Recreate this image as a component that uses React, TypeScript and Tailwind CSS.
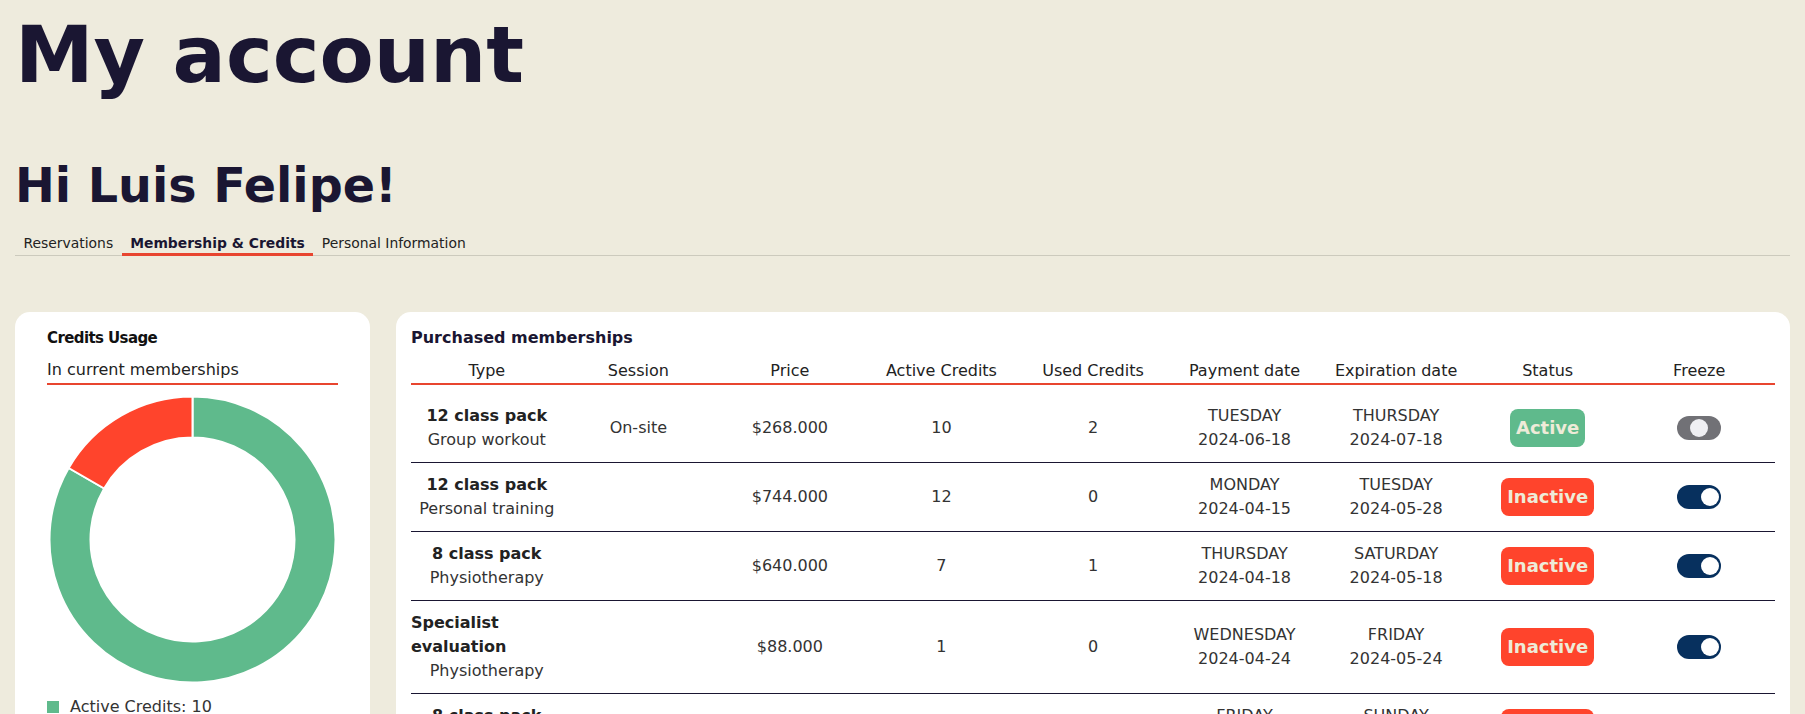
import React from "react"

type Membership = {
  title: string
  kind: string
  session: string
  price: string
  active: number
  used: number
  payDay: string
  payDate: string
  expDay: string
  expDate: string
  status: "Active" | "Inactive"
  frozen: boolean
}

const memberships: Membership[] = [
  { title: "12 class pack", kind: "Group workout", session: "On-site", price: "$268.000", active: 10, used: 2, payDay: "TUESDAY", payDate: "2024-06-18", expDay: "THURSDAY", expDate: "2024-07-18", status: "Active", frozen: false },
  { title: "12 class pack", kind: "Personal training", session: "", price: "$744.000", active: 12, used: 0, payDay: "MONDAY", payDate: "2024-04-15", expDay: "TUESDAY", expDate: "2024-05-28", status: "Inactive", frozen: true },
  { title: "8 class pack", kind: "Physiotherapy", session: "", price: "$640.000", active: 7, used: 1, payDay: "THURSDAY", payDate: "2024-04-18", expDay: "SATURDAY", expDate: "2024-05-18", status: "Inactive", frozen: true },
  { title: "Specialist evaluation", kind: "Physiotherapy", session: "", price: "$88.000", active: 1, used: 0, payDay: "WEDNESDAY", payDate: "2024-04-24", expDay: "FRIDAY", expDate: "2024-05-24", status: "Inactive", frozen: true },
  { title: "8 class pack", kind: "Group workout", session: "", price: "$512.000", active: 8, used: 0, payDay: "FRIDAY", payDate: "2024-03-15", expDay: "SUNDAY", expDate: "2024-04-14", status: "Inactive", frozen: true },
]

const headers = ["Type", "Session", "Price", "Active Credits", "Used Credits", "Payment date", "Expiration date", "Status", "Freeze"]

// annular sector, angles clockwise from 12 o'clock
function sector(cx: number, cy: number, R: number, r: number, a0: number, a1: number) {
  const pt = (rad: number, a: number) => [cx + rad * Math.sin((a * Math.PI) / 180), cy - rad * Math.cos((a * Math.PI) / 180)]
  const large = a1 - a0 > 180 ? 1 : 0
  const [x0, y0] = pt(R, a0)
  const [x1, y1] = pt(R, a1)
  const [x2, y2] = pt(r, a1)
  const [x3, y3] = pt(r, a0)
  return `M${x0} ${y0} A${R} ${R} 0 ${large} 1 ${x1} ${y1} L${x2} ${y2} A${r} ${r} 0 ${large} 0 ${x3} ${y3} Z`
}

function CreditsDonut({ active, used }: { active: number; used: number }) {
  const total = active + used
  const split = (active / total) * 360
  return (
    <svg viewBox="0 0 291 291" className="mt-[9.5px] block h-[291px] w-[291px]">
      <path d={sector(145.5, 145.5, 143, 102, 0, split)} fill="#5fba8c" stroke="#ffffff" strokeWidth={2} />
      <path d={sector(145.5, 145.5, 143, 102, split, 360)} fill="#ff442c" stroke="#ffffff" strokeWidth={2} />
    </svg>
  )
}

function Toggle({ on }: { on: boolean }) {
  return (
    <div className={on ? "relative h-6 w-11 rounded-full bg-[#07305e]" : "relative h-6 w-11 rounded-full bg-[#717176]"}>
      <div
        className={
          on
            ? "absolute top-[3px] right-[2px] h-[18px] w-[18px] rounded-full bg-white"
            : "absolute top-[3px] left-[13px] h-[18px] w-[18px] rounded-full bg-[#efeff3]"
        }
      />
    </div>
  )
}

function StatusBadge({ status }: { status: Membership["status"] }) {
  return (
    <span
      className={
        status === "Active"
          ? "rounded-[8px] bg-[#5fba8c] px-[6px] py-[6px] text-[18px] font-bold leading-[26px] text-[#eeebd8]"
          : "rounded-[8px] bg-[#ff442c] px-[6px] py-[6px] text-[18px] font-bold leading-[26px] text-[#eeebd8]"
      }
    >
      {status}
    </span>
  )
}

function MembershipRow({ m }: { m: Membership }) {
  return (
    <div className="grid grid-cols-9 border-b border-[#1a1632] py-[10px] text-[16px] leading-6 text-[#333]">
      <div className="flex flex-col items-center justify-center">
        <span className="text-left font-bold text-[#222]">{m.title}</span>
        <span>{m.kind}</span>
      </div>
      <div className="flex items-center justify-center">{m.session}</div>
      <div className="flex items-center justify-center">{m.price}</div>
      <div className="flex items-center justify-center">{m.active}</div>
      <div className="flex items-center justify-center">{m.used}</div>
      <div className="flex flex-col items-center justify-center">
        <span>{m.payDay}</span>
        <span>{m.payDate}</span>
      </div>
      <div className="flex flex-col items-center justify-center">
        <span>{m.expDay}</span>
        <span>{m.expDate}</span>
      </div>
      <div className="flex items-center justify-center">
        <StatusBadge status={m.status} />
      </div>
      <div className="flex items-center justify-center">
        <Toggle on={m.frozen} />
      </div>
    </div>
  )
}

export default function App() {
  return (
    <div className="min-h-screen bg-[#eeebdd] px-[15px] pt-[15px] pb-10 font-['DejaVu_Sans',sans-serif] text-[#1a1632]">
      <h1 className="text-[79px] font-bold leading-[80px]">My account</h1>
      <h2 className="mt-[67px] text-[47.6px] font-bold leading-[47px]">Hi Luis Felipe!</h2>

      {/* Tabs */}
      <div className="mt-[26px] flex border-b border-[#cccabd] text-[13.9px] leading-4">
        <button className="-mb-px border-b-[3px] border-transparent px-[8.5px] pb-[2px] text-[#222]">Reservations</button>
        <button className="-mb-px border-b-[3px] border-[#e8452f] px-[8.5px] pb-[2px] font-bold text-[#1a1632]">Membership &amp; Credits</button>
        <button className="-mb-px border-b-[3px] border-transparent px-[8.5px] pb-[2px] text-[#222]">Personal Information</button>
      </div>

      <div className="mt-[56px] flex items-start gap-[26px]">
        {/* Credits usage */}
        <div className="w-[355px] shrink-0 rounded-[15px] bg-white px-[32px] pt-[14px] pb-6">
          <div className="text-[15px] font-bold leading-6 tracking-[-0.6px] text-[#111]">Credits Usage</div>
          <div className="mt-[7.5px] border-b-2 border-[#e8452f] pb-px text-[16px] leading-6 text-[#222]">In current memberships</div>
          <CreditsDonut active={10} used={2} />
          <div className="mt-[10px] flex flex-col gap-1 text-[16px] leading-6 text-[#333]">
            <div className="flex items-center gap-[11px]">
              <span className="h-3 w-3 bg-[#5fba8c]" />
              Active Credits: 10
            </div>
            <div className="flex items-center gap-[11px]">
              <span className="h-3 w-3 bg-[#ff442c]" />
              Used Credits: 2
            </div>
          </div>
        </div>

        {/* Purchased memberships */}
        <div className="min-w-0 flex-1 rounded-[15px] bg-white px-[15px] pt-[14px] pb-6">
          <div className="text-[16px] font-bold leading-6 text-[#1a1632]">Purchased memberships</div>
          <div className="mt-[9px] grid grid-cols-9 border-b-2 border-[#e8452f] text-center text-[16px] leading-6 text-[#222]">
            {headers.map((h) => (
              <div key={h}>{h}</div>
            ))}
          </div>
          <div className="mt-[8.5px]">
            {memberships.map((m, i) => (
              <MembershipRow key={i} m={m} />
            ))}
          </div>
        </div>
      </div>
    </div>
  )
}
